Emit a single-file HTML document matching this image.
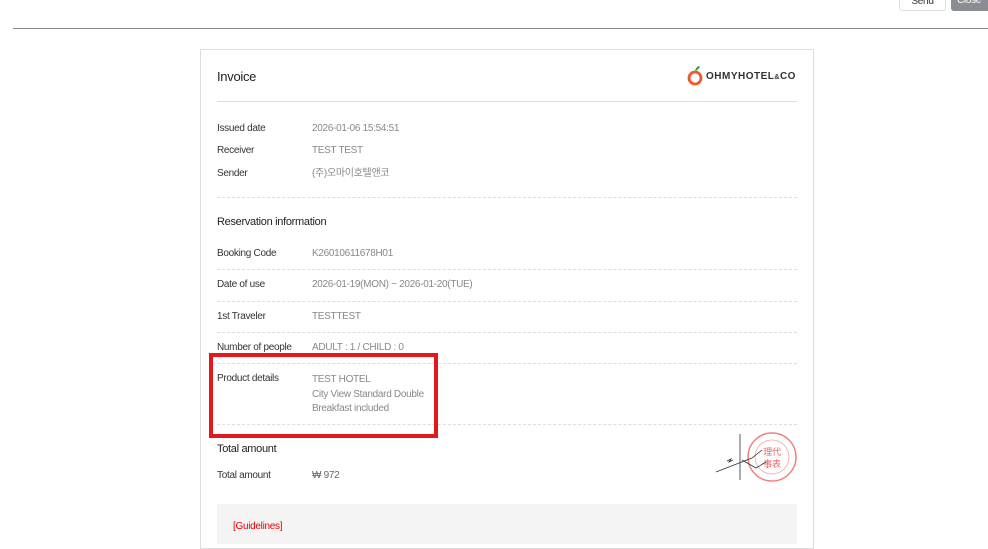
<!DOCTYPE html>
<html><head><meta charset="utf-8"><style>
*{margin:0;padding:0;box-sizing:border-box}
body{width:988px;height:536px;overflow:hidden;background:#fff;font-family:"Liberation Sans","Noto Sans CJK KR",sans-serif;position:relative;letter-spacing:-0.3px}
.a{position:absolute;white-space:nowrap;line-height:12px}
.l{font-size:10px;color:#333}
.v{font-size:10px;color:#888}
.d{position:absolute;left:217px;width:580px;border-top:1px dashed #ddd}
</style></head><body>
<div class="a" style="left:899px;top:-7px;width:47px;height:18px;border:1px solid #ddd;border-radius:3px;font-size:10px;color:#333;text-align:center;line-height:16px">Send</div>
<div class="a" style="left:951px;top:-7px;width:40px;height:18px;background:#8a8e93;border-radius:3px;font-size:10px;color:#fff;line-height:16px;padding-left:6px">Close</div>
<div class="a" style="left:13px;top:28px;width:975px;border-top:1px solid #888"></div>
<div class="a" style="left:200px;top:49px;width:614px;height:500px;border:1px solid #ddd"></div>
<div class="a" style="left:217px;top:69px;font-size:13px;color:#222;line-height:15px">Invoice</div>
<div class="a" style="left:687px;top:65px;width:18px;height:21px">
<svg width="18" height="21" viewBox="0 0 18 21"><circle cx="8" cy="13" r="6" fill="none" stroke="#f05a28" stroke-width="2.8"/><path d="M8 6 Q9 1 13 1 Q12 5 8 6z" fill="#3aa04a"/></svg></div>
<div class="a" style="left:706px;top:71px;font-size:10px;font-weight:bold;color:#333;letter-spacing:0.5px">OHMYHOTEL<span style="font-size:7px">&amp;</span>CO</div>
<div class="a" style="left:217px;top:101px;width:580px;border-top:1px solid #ddd"></div>
<div class="a l" style="left:217px;top:123px">Issued date</div><div class="a v" style="left:312px;top:123px">2026-01-06 15:54:51</div>
<div class="a l" style="left:217px;top:145px">Receiver</div><div class="a v" style="left:312px;top:145px">TEST TEST</div>
<div class="a l" style="left:217px;top:168px">Sender</div><div class="a v" style="left:312px;top:168px">(주)오마이호텔앤코</div>
<div class="d" style="top:197px"></div>
<div class="a" style="left:217px;top:216px;font-size:11px;color:#222;line-height:13px">Reservation information</div>
<div class="a l" style="left:217px;top:248px">Booking Code</div><div class="a v" style="left:312px;top:248px">K26010611678H01</div>
<div class="d" style="top:269px"></div>
<div class="a l" style="left:217px;top:279px">Date of use</div><div class="a v" style="left:312px;top:279px">2026-01-19(MON) ~ 2026-01-20(TUE)</div>
<div class="d" style="top:301px"></div>
<div class="a l" style="left:217px;top:311px">1st Traveler</div><div class="a v" style="left:312px;top:311px">TESTTEST</div>
<div class="d" style="top:332px"></div>
<div class="a l" style="left:217px;top:342px">Number of people</div><div class="a v" style="left:312px;top:342px">ADULT : 1 / CHILD : 0</div>
<div class="d" style="top:363px"></div>
<div class="a l" style="left:217px;top:373px">Product details</div>
<div class="a v" style="left:312px;top:373px;line-height:14.5px">TEST HOTEL<br>City View Standard Double<br>Breakfast included</div>
<div class="d" style="top:424px"></div>
<div class="a" style="left:209px;top:353px;width:229px;height:85px;border:4px solid #e4181c"></div>
<div class="a" style="left:217px;top:443px;font-size:11px;color:#222;line-height:13px">Total amount</div>
<div class="a l" style="left:217px;top:470px">Total amount</div><div class="a v" style="left:312px;top:470px;color:#666">₩ 972</div>
<svg class="a" style="left:712px;top:428px" width="90" height="56" viewBox="0 0 90 56">
<circle cx="60" cy="29" r="24" fill="none" stroke="#f08080" stroke-width="1.5"/>
<circle cx="60" cy="29" r="17" fill="none" stroke="#f4a0a0" stroke-width="0.8"/>
<text x="60" y="27" font-size="9" fill="#f06060" text-anchor="middle" font-family="Noto Sans CJK SC">理代</text>
<text x="60" y="39" font-size="9" fill="#f06060" text-anchor="middle" font-family="Noto Sans CJK SC">事表</text>
<path d="M28 6 L28 52 M4 44 L40 30 L50 22 M30 32 L44 40 L54 34" stroke="#333" stroke-width="0.8" fill="none"/>
<path d="M15 33 l4 -2 l-2 3 l4 -2" stroke="#333" stroke-width="0.8" fill="none"/>
</svg>
<div class="a" style="left:217px;top:504px;width:580px;height:40px;background:#f4f4f4"></div>
<div class="a" style="left:233px;top:521px;font-size:10px;color:#e00">[Guidelines]</div>
</body></html>
